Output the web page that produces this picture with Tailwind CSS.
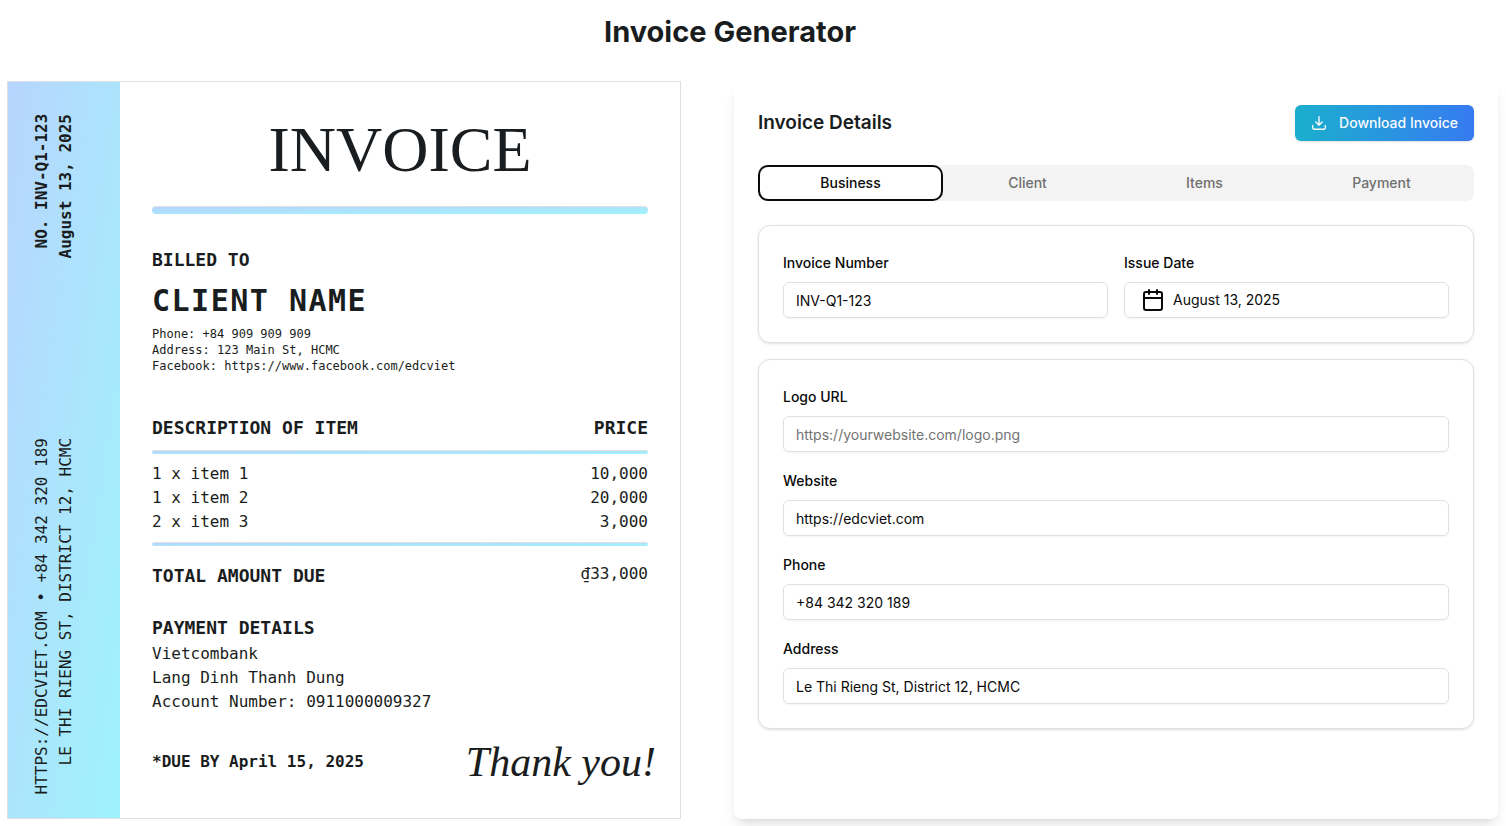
<!DOCTYPE html>
<html lang="en">
<head>
<meta charset="utf-8">
<meta name="viewport" content="width=device-width, initial-scale=1">
<title>Invoice Generator</title>
<script src="https://cdn.jsdelivr.net/npm/@tailwindcss/browser@4"></script>
</head>
<body class="bg-white font-['Inter',sans-serif] text-[#0a0a0a]">
<h1 class="pt-3 pr-[46px] text-center text-[29px] leading-10 font-bold text-[#1a1d20]">Invoice Generator</h1>
<main class="mt-[29px] grid grid-cols-[674fr_764fr] gap-[53px] pr-2 pb-[7px] pl-[7px]">

  <article class="flex border border-[#dedfe0] font-['DejaVu_Sans_Mono',monospace] text-base text-[#1a1d20]">
    <aside class="flex w-28 shrink-0 flex-col items-start justify-between bg-linear-to-br from-[#b7d5fe] to-[#9ef3fb] pt-8 pb-6 pl-[22px] uppercase">
      <p class="rotate-180 text-end font-bold normal-case [writing-mode:vertical-rl]">NO. INV-Q1-123<br>August 13, 2025</p>
      <p class="rotate-180 text-end [writing-mode:vertical-rl]">https://edcviet.com • +84 342 320 189<br>Le Thi Rieng St, District 12, HCMC</p>
    </aside>
    <div class="flex grow flex-col px-8 pt-8 pb-4">
      <h2 class="text-center font-['Liberation_Serif',serif] text-[64px] leading-[72px] uppercase">Invoice</h2>
      <div class="mt-5 h-2 rounded-full border-t border-[#dedfe0] bg-linear-to-br from-[#b7d5fe] to-[#9ef3fb]"></div>
      <h3 class="mt-8 text-lg leading-7 font-bold">BILLED TO</h3>
      <p class="mt-[9px] text-3xl leading-9 font-bold tracking-wider">CLIENT NAME</p>
      <p class="mt-[7px] text-xs leading-4">Phone: +84 909 909 909<br>Address: 123 Main St, HCMC<br>Facebook: https://www.facebook.com/edcviet</p>

      <table class="mt-10 w-full">
        <thead>
          <tr class="text-lg leading-7">
            <th class="p-0 text-left font-bold">DESCRIPTION OF ITEM</th>
            <th class="p-0 text-right font-bold">PRICE</th>
          </tr>
        </thead>
        <tbody>
          <tr><td colspan="2" class="py-2"><div class="h-1 rounded-sm border-t border-[#dedfe0] bg-linear-to-br from-[#b7d5fe] to-[#9ef3fb]"></div></td></tr>
          <tr><td>1 x item 1</td><td class="text-right">10,000</td></tr>
          <tr><td>1 x item 2</td><td class="text-right">20,000</td></tr>
          <tr><td>2 x item 3</td><td class="text-right">3,000</td></tr>
        </tbody>
      </table>
      <div class="mt-2 h-1 rounded-sm border-t border-[#dedfe0] bg-linear-to-br from-[#b7d5fe] to-[#9ef3fb]"></div>
      <div class="mt-4 flex items-start justify-between">
        <h3 class="text-lg leading-7 font-bold">TOTAL AMOUNT DUE</h3>
        <p>₫33,000</p>
      </div>
      <h3 class="mt-6 text-lg leading-7 font-bold">PAYMENT DETAILS</h3>
      <p>Vietcombank<br>Lang Dinh Thanh Dung<br>Account Number: 0911000009327</p>
      <div class="mt-2 -mr-2 flex items-center justify-between">
        <p class="font-bold">*DUE BY April 15, 2025</p>
        <p class="font-['Liberation_Serif',serif] text-[42px] leading-[80px] italic">Thank you!</p>
      </div>
    </div>
  </article>

  <section class="rounded-lg p-6 shadow-lg">
    <header class="flex items-center justify-between">
      <h2 class="text-[19px] leading-7 font-semibold text-[#1a1d20]">Invoice Details</h2>
      <button type="button" class="flex h-9 items-center gap-3 rounded-md bg-linear-to-r from-[#1aaecd] to-[#367af0] px-4 text-sm font-medium text-gray-50 shadow-sm">
        <svg class="size-4" viewBox="0 0 16 16" fill="none" stroke="currentColor" stroke-width="1.4" stroke-linecap="round" stroke-linejoin="round" aria-hidden="true"><path d="M8 1.700v8.300M4.800 7 8 10.200 11.200 7M1.700 10.400v2.400a1.400 1.400 0 0 0 1.400 1.400h9.800a1.400 1.400 0 0 0 1.400-1.400v-2.400"/></svg>
        Download Invoice
      </button>
    </header>

    <nav role="tablist" aria-label="Invoice sections" class="mt-6 grid h-9 grid-cols-4 rounded-lg bg-[#f3f3f3] p-1 text-sm font-medium text-[#6f6f6f]">
      <button type="button" role="tab" aria-selected="true" class="rounded-md bg-white text-[#0a0a0a] ring-2 ring-[#0a0a0a] ring-offset-2 ring-offset-white">Business</button>
      <button type="button" role="tab" aria-selected="false">Client</button>
      <button type="button" role="tab" aria-selected="false">Items</button>
      <button type="button" role="tab" aria-selected="false">Payment</button>
    </nav>

    <div class="mt-6 grid grid-cols-2 gap-4 rounded-xl border border-[#dfe0e2] p-6 shadow-sm">
      <div>
        <label for="number" class="mb-1.5 block text-sm leading-[26px] font-medium">Invoice Number</label>
        <input id="number" type="text" value="INV-Q1-123" class="h-9 w-full rounded-md border border-[#dfe0e2] px-3 text-sm shadow-xs">
      </div>
      <div>
        <label for="date" class="mb-1.5 block text-sm leading-[26px] font-medium">Issue Date</label>
        <button id="date" type="button" class="flex h-9 w-full items-center gap-2 rounded-md border border-[#dfe0e2] px-4 text-sm shadow-xs">
          <svg class="size-6" viewBox="0 0 24 24" fill="none" stroke="currentColor" stroke-width="2" stroke-linecap="round" stroke-linejoin="round" aria-hidden="true"><path d="M8 2v4M16 2v4"/><rect width="18" height="18" x="3" y="4" rx="2"/><path d="M3 10h18"/></svg>
          August 13, 2025
        </button>
      </div>
    </div>

    <div class="mt-4 grid gap-4 rounded-xl border border-[#dfe0e2] p-6 shadow-sm">
      <div>
        <label for="logo" class="mb-1.5 block text-sm leading-[26px] font-medium">Logo URL</label>
        <input id="logo" type="text" placeholder="https://yourwebsite.com/logo.png" class="h-9 w-full rounded-md border border-[#dfe0e2] px-3 text-sm shadow-xs placeholder:text-[#737373]">
      </div>
      <div>
        <label for="website" class="mb-1.5 block text-sm leading-[26px] font-medium">Website</label>
        <input id="website" type="text" value="https://edcviet.com" class="h-9 w-full rounded-md border border-[#dfe0e2] px-3 text-sm shadow-xs">
      </div>
      <div>
        <label for="phone" class="mb-1.5 block text-sm leading-[26px] font-medium">Phone</label>
        <input id="phone" type="text" value="+84 342 320 189" class="h-9 w-full rounded-md border border-[#dfe0e2] px-3 text-sm shadow-xs">
      </div>
      <div>
        <label for="address" class="mb-1.5 block text-sm leading-[26px] font-medium">Address</label>
        <input id="address" type="text" value="Le Thi Rieng St, District 12, HCMC" class="h-9 w-full rounded-md border border-[#dfe0e2] px-3 text-sm shadow-xs">
      </div>
    </div>
  </section>
</main>
</body>
</html>
